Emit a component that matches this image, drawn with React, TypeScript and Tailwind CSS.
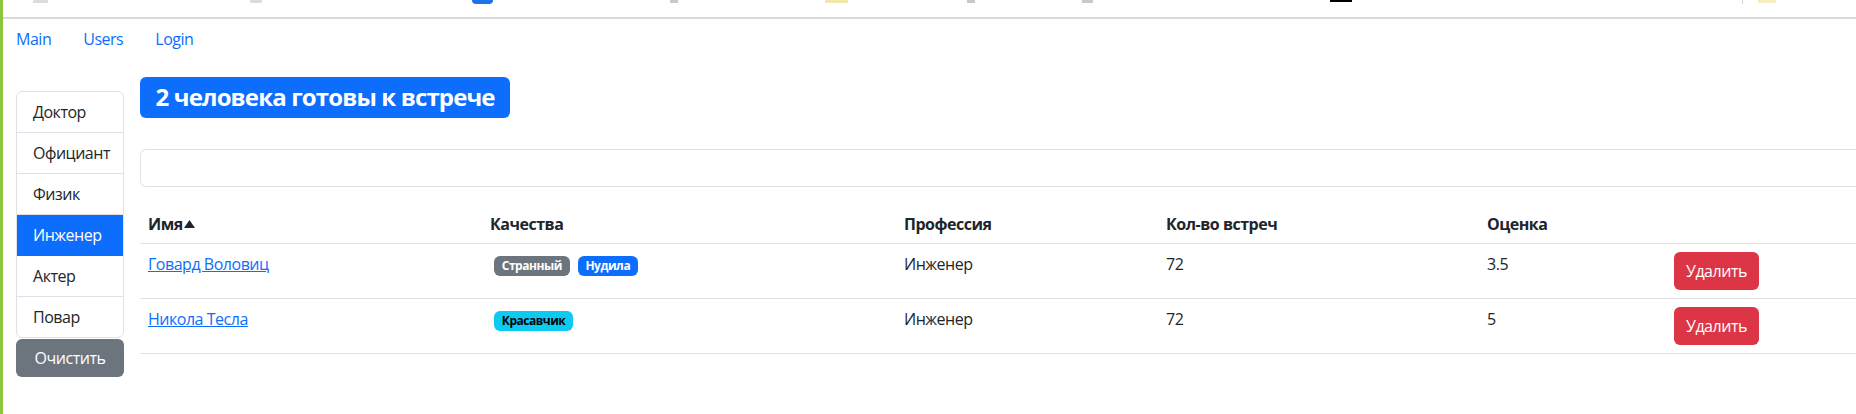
import React from 'react';

const professions = ['Доктор', 'Официант', 'Физик', 'Инженер', 'Актер', 'Повар'];

const users = [
  {
    name: 'Говард Воловиц',
    qualities: [
      { name: 'Странный', cls: 'bg-[#6c757d] text-white' },
      { name: 'Нудила', cls: 'bg-[#0d6efd] text-white' },
    ],
    profession: 'Инженер',
    meetings: 72,
    rate: 3.5,
  },
  {
    name: 'Никола Тесла',
    qualities: [{ name: 'Красавчик', cls: 'bg-[#0dcaf0] text-black' }],
    profession: 'Инженер',
    meetings: 72,
    rate: 5,
  },
];

// cut-off bookmark icons above the page
const TopStrip = () => (
  <div className="flex items-start h-[17px]">
    <span className="ml-[33px] w-[15px] h-[3px] bg-[#dcdcdc]" />
    <span className="ml-[202px] w-[12px] h-[3px] bg-[#dcdcdc]" />
    <span className="ml-[210px] w-[21px] h-[4px] rounded-b-full bg-[#1a73e8]" />
    <span className="ml-[177px] w-[8px] h-[3px] bg-[#c9c9c9]" />
    <span className="ml-[147px] w-[23px] h-[3px] bg-[#f3e6ad]" />
    <span className="ml-[119px] w-[8px] h-[3px] bg-[#c9c9c9]" />
    <span className="ml-[107px] w-[11px] h-[3px] bg-[#c9c9c9]" />
    <span className="ml-[237px] w-[22px] h-[2px] bg-black" />
    <span className="ml-[390px] w-[1px] h-[4px] bg-[#d5d5d5]" />
    <span className="ml-[15px] w-[18px] h-[3px] bg-[#f6edc4]" />
  </div>
);

const Sidebar = () => {
  const active = 'Инженер';
  return (
    <div className="shrink-0 px-4 pt-8">
      <ul className="w-[108px] rounded-md border border-[#dee2e6] overflow-hidden">
        {professions.map((p, i) => (
          <li
            key={p}
            className={
              'px-4 py-2 leading-6 ' +
              (i < professions.length - 1 ? 'border-b ' : '') +
              (p === active
                ? 'bg-[#0d6efd] text-white border-[#0d6efd]'
                : 'text-[#212529] border-[#dee2e6]')
            }>
            {p}
          </li>
        ))}
      </ul>
      <button className="mt-px w-[108px] h-[38px] rounded-md bg-[#6c757d] text-white leading-6">
        Очистить
      </button>
    </div>
  );
};

const UsersTable = () => (
  <table className="mt-4 w-full table-fixed border-collapse text-[#212529]">
    <colgroup>
      <col className="w-[342px]" />
      <col className="w-[414px]" />
      <col className="w-[262px]" />
      <col className="w-[321px]" />
      <col className="w-[187px]" />
      <col />
    </colgroup>
    <thead>
      <tr className="border-b border-[#dee2e6]">
        <th className="px-2 pt-[9px] pb-[7px] text-left font-bold leading-6">
          <span className="inline-flex items-center">
            Имя
            <svg width="11" height="8" viewBox="0 0 11 8" className="ml-px">
              <polygon points="5.5,0 11,8 0,8" fill="#212529" />
            </svg>
          </span>
        </th>
        <th className="px-2 pt-[9px] pb-[7px] text-left font-bold leading-6">Качества</th>
        <th className="px-2 pt-[9px] pb-[7px] text-left font-bold leading-6">Профессия</th>
        <th className="px-2 pt-[9px] pb-[7px] text-left font-bold leading-6">Кол-во встреч</th>
        <th className="px-2 pt-[9px] pb-[7px] text-left font-bold leading-6">Оценка</th>
        <th className="px-2 py-2" />
      </tr>
    </thead>
    <tbody>
      {users.map((u) => (
        <tr key={u.name} className="border-b border-[#dee2e6]">
          <td className="px-2 py-2 align-top leading-6">
            <a href="#" className="text-[#0d6efd] underline">
              {u.name}
            </a>
          </td>
          <td className="px-2 py-2 align-top leading-6">
            <div className="flex">
              {u.qualities.map((q) => (
                <span
                  key={q.name}
                  className={
                    'm-1 px-[7.8px] py-[4.2px] rounded-md text-[12px] font-bold leading-none ' + q.cls
                  }>
                  {q.name}
                </span>
              ))}
            </div>
          </td>
          <td className="px-2 py-2 align-top leading-6">{u.profession}</td>
          <td className="px-2 py-2 align-top leading-6">{u.meetings}</td>
          <td className="px-2 py-2 align-top leading-6">{u.rate}</td>
          <td className="px-2 py-2 align-top">
            <button className="h-[38px] px-3 rounded-md bg-[#dc3545] text-white leading-6">
              Удалить
            </button>
          </td>
        </tr>
      ))}
    </tbody>
  </table>
);

export default function App() {
  return (
    <div className="relative w-[1856px] h-[414px] overflow-hidden bg-white text-base tracking-[-0.03em] font-['Open_Sans','Noto_Sans',sans-serif]">
      <div className="w-[2100px]">
        <TopStrip />
        <div className="h-[2px] bg-[#d9d9d9]" />
        <nav className="flex">
          <a href="#" className="px-4 py-2 leading-6 text-[#0d6efd]">Main</a>
          <a href="#" className="px-4 py-2 leading-6 text-[#0d6efd]">Users</a>
          <a href="#" className="px-4 py-2 leading-6 text-[#0d6efd]">Login</a>
        </nav>
        <div className="flex">
          <Sidebar />
          <div className="flex-1 pt-[18px]">
            <h2>
              <span className="inline-block rounded-md bg-[#0d6efd] px-[15.6px] py-[8.4px] text-[24px] font-bold leading-none tracking-[-0.036em] text-white">
                2 человека готовы к встрече
              </span>
            </h2>
            <input
              type="text"
              className="mt-[31px] block w-full h-[38px] rounded-md border border-[#dee2e6] px-3 outline-none"
            />
            <UsersTable />
          </div>
        </div>
      </div>
      <div className="absolute left-0 top-0 w-[3px] h-full bg-[#8cc63e]" />
    </div>
  );
}
